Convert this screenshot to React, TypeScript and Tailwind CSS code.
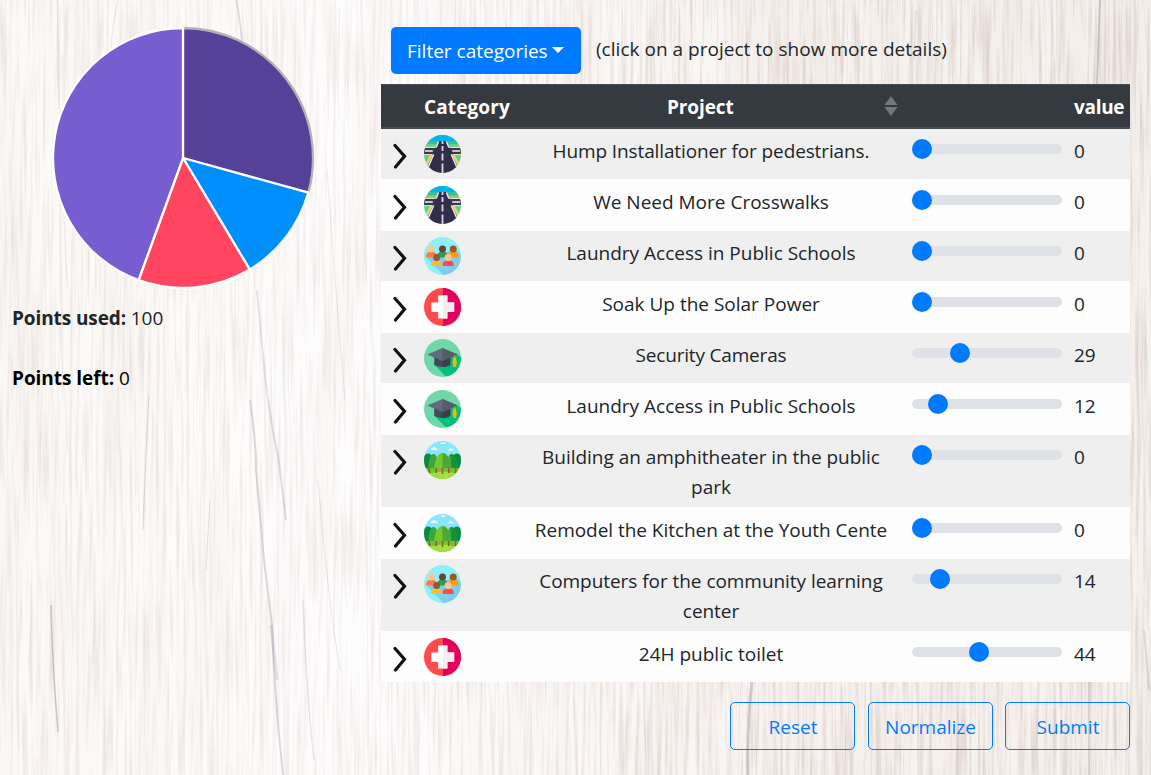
import React from "react";

type Kind = "road" | "people" | "health" | "school" | "park";
type Row = { kind: Kind; title: string; value: number; track: string };

const rows: Row[] = [
  { kind: "road", title: "Hump Installationer for pedestrians.", value: 0, track: "tracking-[-0.12px]" },
  { kind: "road", title: "We Need More Crosswalks", value: 0, track: "tracking-normal" },
  { kind: "people", title: "Laundry Access in Public Schools", value: 0, track: "tracking-normal" },
  { kind: "health", title: "Soak Up the Solar Power", value: 0, track: "tracking-normal" },
  { kind: "school", title: "Security Cameras", value: 29, track: "tracking-[-0.18px]" },
  { kind: "school", title: "Laundry Access in Public Schools", value: 12, track: "tracking-normal" },
  { kind: "park", title: "Building an amphitheater in the public park", value: 0, track: "tracking-[-0.03px]" },
  { kind: "park", title: "Remodel the Kitchen at the Youth Cente", value: 0, track: "tracking-[-0.04px]" },
  { kind: "people", title: "Computers for the community learning center", value: 14, track: "tracking-[-0.05px]" },
  { kind: "health", title: "24H public toilet", value: 44, track: "tracking-normal" },
];

const slices = [
  { value: 29, fill: "#554298", stroke: "#b3b3b3" },
  { value: 12, fill: "#008ffb", stroke: "#ffffff" },
  { value: 14, fill: "#ff4560", stroke: "#ffffff" },
  { value: 44, fill: "#775dd0", stroke: "#ffffff" },
];

function Pie() {
  const total = slices.reduce((s, x) => s + x.value, 0);
  let sum = 0;
  const point = (v: number) => {
    const a = (v / total) * Math.PI * 2;
    return `${131 + 130 * Math.sin(a)} ${131 - 130 * Math.cos(a)}`;
  };
  return (
    <svg width="262" height="262" viewBox="0 0 262 262" className="block overflow-visible">
      {slices.map((s) => {
        const from = point(sum);
        sum += s.value;
        return (
          <path
            key={s.fill}
            d={`M131 131 L${from} A130 130 0 0 1 ${point(sum)} Z`}
            fill={s.fill}
            stroke={s.stroke}
            strokeWidth="2.3"
          />
        );
      })}
    </svg>
  );
}

function Person({ x, y, skin, shirt }: { x: number; y: number; skin: string; shirt: string }) {
  return (
    <g>
      <path d={`M${x - 5.5} ${y + 8.5} v-1.5 q0 -4 4.5 -4 h2 q4.500 0 4.500 4 v1.500z`} fill={shirt} />
      <circle cx={x} cy={y} r="3.6" fill={skin} />
    </g>
  );
}

function CategoryIcon({ kind }: { kind: Kind }) {
  const id = React.useId();
  return (
    <svg width="37" height="38" viewBox="0 0 38 38" preserveAspectRatio="none" className="block">
      <clipPath id={id}>
        <circle cx="19" cy="19" r="19" />
      </clipPath>
      <g clipPath={`url(#${id})`}>
        {kind === "road" && (
          <>
            <rect width="38" height="38" fill="#62cf92" />
            <rect width="38" height="6.5" fill="#00b4f0" />
            <path d="M0 6.5H15L13 9.500H0zM38 6.5H23L25 9.500H38z" fill="#45b98a" />
            <path d="M0 9.500H12L10 12.500H0zM38 9.500H26L28 12.500H38z" fill="#7fcf85" />
            <path d="M0 13H38V19H0z" fill="#3b3654" />
            <path d="M0 12.500H12M38 12.500H26M0 19.500H8M38 19.500H30" stroke="#efe0b8" strokeWidth="1.1" />
            <path d="M1 16h8M37 16h-8" stroke="#f4f1f5" strokeWidth="1.5" />
            <path d="M15 6H23L37 38H1z" fill="#322e4a" />
            <path d="M8 19.500L1.500 31M30 19.500L36.500 31" stroke="#f7cf6b" strokeWidth="2.4" />
            <path d="M15 6.500L12.500 12.500M23 6.500L25.500 12.500M10 19.500L3.500 34M28 19.500L34.500 34" stroke="#f4f1f5" strokeWidth="1.4" />
            <path d="M19 6v3M19 11v5M19 18.500v7M19 28.500v9.500" stroke="#d6d4e0" strokeWidth="1.9" />
          </>
        )}
        {kind === "people" && (
          <>
            <rect width="38" height="38" fill="#8df0fb" />
            <path d="M3 21L20 38H38V18L33 12z" fill="#7fcdea" />
            <Person x={7.5} y={12} skin="#ffc78f" shirt="#ff7849" />
            <Person x={30} y={12} skin="#a5561f" shirt="#ff9b14" />
            <Person x={19} y={12} skin="#6b4138" shirt="#2f9e48" />
            <Person x={13} y={20.5} skin="#8d5a3c" shirt="#ffb92c" />
            <Person x={24.8} y={20.5} skin="#ffc78f" shirt="#fb4b52" />
          </>
        )}
        {kind === "health" && (
          <>
            <rect width="38" height="38" fill="#ff4b4b" />
            <rect x="19.500" width="19" height="38" fill="#e5005b" />
            <path d="M14.500 7.500H24V14.500H31V24H24V30.500H14.500V24H7.500V14.500H14.500z" fill="#fff" />
            <path d="M19.500 7.500H24V14.500H31V24H24V30.500H19.500z" fill="#f1eef0" />
          </>
        )}
        {kind === "school" && (
          <>
            <rect width="38" height="38" fill="#6fd8a9" />
            <path d="M11 26L23 38H38V18L33 15z" fill="#00c179" />
            <path d="M10.500 17V26Q19 30 27 26V17z" fill="#444a57" />
            <path d="M19 19H27V26Q23 28 19 28z" fill="#3a3f4b" />
            <path d="M19 9L34.500 15.500L19 22L3.500 15.500z" fill="#626b7c" />
            <path d="M19 9L34.500 15.500L19 22z" fill="#545c6b" />
            <path d="M31.500 16V20" stroke="#e99a14" strokeWidth="1" />
            <path d="M30.300 18.500H32.700L33.800 24L32.700 28H30.300L29.300 24z" fill="#ffb20a" />
          </>
        )}
        {kind === "park" && (
          <>
            <rect width="38" height="38" fill="#8be6fb" />
            <path d="M7 9q0-2 2-2q1-2 3 0q2 0 2 2zM25 9q1-2.500 3-1.500q2 0 3 2h-6zM17 3h5v-1.500h-4z" fill="#f4fdff" />
            <rect y="27" width="38" height="11" fill="#6cc22f" />
            <path d="M0 34Q20 27 38 34V38H0z" fill="#a1e03a" />
            <path d="M5.500 25v7M12.500 25v7M19 25v8M25.500 25v7M32.500 25v7" stroke="#a3572c" strokeWidth="1.6" />
            <path d="M0 27V15Q1.500 12.500 4 12.500Q8 12.500 9 18V27zM38 27V15Q36.500 12.500 34 12.500Q30 12.500 29 18V27z" fill="#0a8a3c" />
            <path d="M4.500 26.500Q5 13 10 12.800Q14 13 15 27H5.500zM23 27Q24 13 28 12.800Q33 13 34.500 26.500z" fill="#3ba63a" />
            <path d="M28 12.800Q33 13 34.500 26.500L28 27z" fill="#15903d" />
            <path d="M10.500 27Q12 12.300 19 12Q26 12.300 27.500 27z" fill="#77c62f" />
            <path d="M19 12Q26 12.300 27.500 27H19z" fill="#4aa935" />
          </>
        )}
      </g>
    </svg>
  );
}

function Slider({ value }: { value: number }) {
  return (
    <div className="relative mt-[5px] h-2.5 w-[150px] rounded-full bg-[#dee2e6]">
      <div
        className="absolute -top-[5px] size-5 rounded-full bg-[#007bff]"
        style={{ left: Math.round(value * 1.3) }}
      />
    </div>
  );
}

const cracks = [
  { d: "M236 0Q241 20 243 60", w: 1.5, o: 0.28 },
  { d: "M268 400Q274 440 278 455L286 520", w: 2, o: 0.25 },
  { d: "M250 400Q256 440 256 470L264 560L272 625Q274 690 283 775", w: 2, o: 0.28 },
  { d: "M271 625L277 680", w: 3, o: 0.2 },
  { d: "M51 605Q52 660 58 732", w: 1.5, o: 0.4 },
  { d: "M303 600Q306 690 314 760", w: 1.5, o: 0.18 },
  { d: "M318 480Q328 600 340 670", w: 1, o: 0.18 },
  { d: "M149 395Q145 470 143 530", w: 1, o: 0.25 },
  { d: "M210 500L206 570", w: 1, o: 0.22 },
  { d: "M118 0Q106 50 112 120", w: 1.2, o: 0.15 },
  { d: "M257 290Q263 360 268 400", w: 2, o: 0.2 },
  { d: "M327 170Q334 270 345 400", w: 1, o: 0.15 },
  { d: "M57 0Q60 170 68 290", w: 1, o: 0.12 },
  { d: "M752 682Q747 720 748 775", w: 3, o: 0.32 },
  { d: "M1089 682V775", w: 1.5, o: 0.32 },
  { d: "M1100 0L1097 84", w: 2, o: 0.4 },
  { d: "M1144 630L1149 690", w: 2, o: 0.2 },
  { d: "M916 10L914 60", w: 1.2, o: 0.2 },
];

function Wood() {
  return (
    <svg className="absolute inset-0 -z-10 size-full" preserveAspectRatio="none" viewBox="0 0 1151 775">
      <defs>
        <linearGradient id="tone">
          <stop offset="0" stopColor="#fcfaf8" />
          <stop offset="0.3" stopColor="#fefdfd" />
          <stop offset="0.45" stopColor="#fcfaf9" />
          <stop offset="0.7" stopColor="#f7f3f0" />
          <stop offset="1" stopColor="#f6f2ef" />
        </linearGradient>
        <linearGradient id="fade">
          <stop offset="0" stopColor="#999" />
          <stop offset="0.28" stopColor="#7c7c7c" />
          <stop offset="0.45" stopColor="#aaa" />
          <stop offset="0.65" stopColor="#f4f4f4" />
          <stop offset="1" stopColor="#fff" />
        </linearGradient>
        <mask id="strength">
          <rect width="1151" height="775" fill="url(#fade)" />
        </mask>
        <filter id="grain" x="0" y="0" width="100%" height="100%">
          <feTurbulence type="fractalNoise" baseFrequency="0.3 0.01" numOctaves="4" seed="8" />
          <feColorMatrix values="0 0 0 0 0.66  0 0 0 0 0.55  0 0 0 0 0.51  1.7 0 0 0 -0.74" />
        </filter>
        <filter id="shade" x="0" y="0" width="100%" height="100%">
          <feTurbulence type="fractalNoise" baseFrequency="0.03 0.004" numOctaves="2" seed="3" />
          <feColorMatrix values="0 0 0 0 0.8  0 0 0 0 0.7  0 0 0 0 0.65  0.8 0 0 0 -0.34" />
        </filter>
      </defs>
      <rect width="1151" height="775" fill="url(#tone)" />
      <g mask="url(#strength)">
        <rect width="1151" height="775" filter="url(#shade)" />
        <rect width="1151" height="775" filter="url(#grain)" />
      </g>
      <g fill="none" stroke="#8b7a91">
        {cracks.map((c) => (
          <path key={c.d} d={c.d} strokeWidth={c.w} opacity={c.o} />
        ))}
      </g>
    </svg>
  );
}

const columns = "grid grid-cols-[43px_105px_364px_19px_150px_12px_56px]";

export default function App() {
  return (
    <div className="relative isolate flex h-[775px] w-[1151px] overflow-hidden font-['Open_Sans','Noto_Sans',sans-serif] text-[19px] leading-[30px] text-[#212529]">
      <Wood />
      <aside className="w-[381px] shrink-0 pt-[27px]">
        <div className="ml-[52px]">
          <Pie />
        </div>
        <p className="mt-[14px] ml-3 tracking-[-0.1px]">
          <b>Points used:</b> 100
        </p>
        <p className="mt-[30px] ml-3 tracking-[-0.05px] text-black">
          <b>Points left:</b> 0
        </p>
      </aside>
      <main className="w-[749px] shrink-0 pt-[27px]">
        <div className="mb-2.5 ml-2.5 flex h-[47px] gap-[15px]">
          <button className="flex w-[190px] items-center gap-1 rounded-[5px] bg-[#007bff] pl-4 text-white">
            <span className="w-[141px] text-left whitespace-nowrap">Filter categories</span>
            <span className="-mt-0.5 border-x-[6px] border-t-[6px] border-x-transparent border-t-white" />
          </button>
          <span className="pt-[7px] tracking-[0.02px] whitespace-nowrap">(click on a project to show more details)</span>
        </div>
        <div className={`${columns} h-[45px] border-t border-b-2 border-[#454d55] bg-[#343a40] pt-[7px] font-bold text-white`}>
          <span />
          <span className="tracking-[0.1px]">Category</span>
          <span className="flex items-start pl-[138px]">
            <span className="w-[66px] tracking-[-0.1px]">Project</span>
            <svg width="14" height="20" viewBox="0 0 14 20" className="mt-1 ml-[151px] shrink-0" fill="#74787c">
              <path d="M7 0L13.5 9H.5zM7 20L.5 11H13.5z" />
            </svg>
          </span>
          <span />
          <span />
          <span />
          <span className="tracking-[-0.3px]">value</span>
        </div>
        {rows.map((r, i) => (
          <div
            key={i}
            className={`${columns} ${i % 2 ? "bg-[#fdfdfd] pt-2" : "bg-[#efefef] pt-[7px]"} ${
              i === 6 || i === 8 ? "h-[72px]" : i === 9 ? "h-[51px]" : i % 2 ? "h-[52px]" : "h-[50px]"
            }`}
          >
            <svg width="15" height="26" viewBox="0 0 15 26" className="mt-[7px] ml-[12px]" fill="none" stroke="#111" strokeWidth="3.2" strokeLinecap="round">
              <path d="M2 2.500L11.500 13.200L2.500 24" />
            </svg>
            <div className="-mt-px">
              <CategoryIcon kind={r.kind} />
            </div>
            <div className={`text-center ${r.track}`}>{r.title}</div>
            <span />
            <div className="pt-[3px]">
              <Slider value={r.value} />
            </div>
            <span />
            <span>{r.value}</span>
          </div>
        ))}
        <div className="mt-5 flex justify-end gap-[12.5px]">
          {["Reset", "Normalize", "Submit"].map((label) => (
            <button key={label} className="h-12 w-[125px] rounded-[5px] border border-[#007bff] pt-0.5 pl-px text-[#007bff]">
              {label}
            </button>
          ))}
        </div>
      </main>
    </div>
  );
}
